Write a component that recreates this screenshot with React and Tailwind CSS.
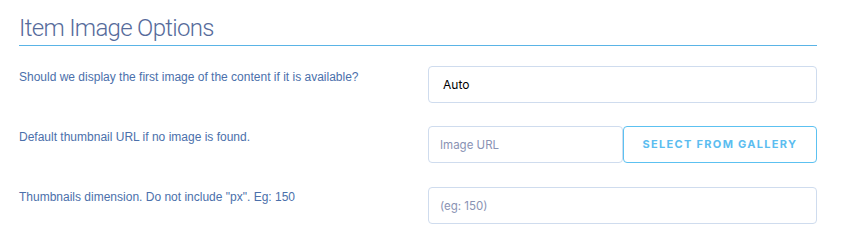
import React from "react";

const rows = [
  { label: "Should we display the first image of the content if it is available?", kind: "select" },
  { label: "Default thumbnail URL if no image is found.", kind: "url" },
  { label: 'Thumbnails dimension. Do not include "px". Eg: 150', kind: "number" },
];

const inputCls =
  "h-[37px] border border-[#cfdcee] rounded-[4px] px-[11px] text-[11.5px] text-black placeholder:text-[#8a93b4] outline-none bg-white";

const App = () => {
  return (
    <div className="w-[844px] h-[248px] bg-white pt-[14px] px-[19px]" style={{ fontFamily: '"Liberation Sans", Arial, sans-serif' }}>
      <div className="w-[798px]">
        <h2
          className="text-[24px] font-light tracking-[-0.7px] text-[#566b9b] leading-[29px] pb-[2px] border-b border-[#5ab4e6]"
          style={{ fontFamily: "Roboto, sans-serif" }}
        >
          Item Image Options
        </h2>

        <div className="mt-[20px] flex flex-col gap-[23px]">
          {rows.map((row, i) => (
            <div key={i} className="flex">
              <div className="w-[409px] pt-[3px] text-[12px] leading-[16px] text-[#4b70ab]">{row.label}</div>
              <div className="flex-1 flex" style={{ fontFamily: "Inter, sans-serif" }}>
                {row.kind === "select" && (
                  <div className={inputCls + " flex-1 flex items-center px-[14px] text-[12px]"}>Auto</div>
                )}
                {row.kind === "url" && (
                  <>
                    <input className={inputCls + " w-[195px]"} placeholder="Image URL" />
                    <button className="flex-1 h-[37px] border border-[#5cc1f1] rounded-[4px] text-[11px] font-bold tracking-[1.3px] text-[#5bbdf0] bg-white">
                      SELECT FROM GALLERY
                    </button>
                  </>
                )}
                {row.kind === "number" && (
                  <input className={inputCls + " flex-1 mt-[1px]"} placeholder="(eg: 150)" />
                )}
              </div>
            </div>
          ))}
        </div>
      </div>
    </div>
  );
};

export default App;
